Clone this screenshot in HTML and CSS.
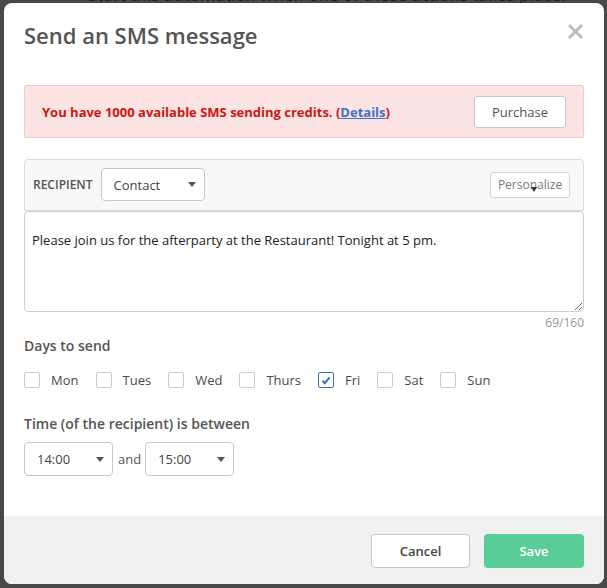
FILE: index.html
```html
<!DOCTYPE html>
<html lang="en">
<head>
    <meta charset="UTF-8">
    <meta name="viewport" content="width=device-width, initial-scale=1.0">
    <title>Send an SMS message</title>
    <link rel="stylesheet" href="styles.css">
</head>
<body>
    <!-- Page behind the overlay -->
    <p class="page-text">Start this automation when one of these actions takes place.</p>

    <div class="modal">
        <header class="modal-header">
            <h1>Send an SMS message</h1>
            <button class="close" aria-label="Close">
                <svg width="15" height="15" viewBox="0 0 15 15">
                    <path d="M2 2 L13 13 M13 2 L2 13" stroke="#bdbdbd" stroke-width="3" stroke-linecap="square"/>
                </svg>
            </button>
        </header>

        <div class="modal-body">
            <div class="alert">
                <p>You have 1000 available SMS sending credits. (<a href="#details">Details</a>)</p>
                <button class="btn">Purchase</button>
            </div>

            <div class="composer">
                <div class="composer-bar">
                    <span class="bar-label">RECIPIENT</span>
                    <div class="select select-contact">
                        <span>Contact</span>
                        <i class="caret"></i>
                    </div>
                    <button class="btn btn-small personalize">
                        Personalize
                        <i class="caret caret-dark"></i>
                    </button>
                </div>
                <textarea class="message">Please join us for the afterparty at the Restaurant! Tonight at 5 pm.</textarea>
            </div>
            <div class="counter">69/160</div>

            <h3 class="field-label">Days to send</h3>
            <div class="days">
                <label class="day"><span class="box"></span>Mon</label>
                <label class="day"><span class="box"></span>Tues</label>
                <label class="day"><span class="box"></span>Wed</label>
                <label class="day"><span class="box"></span>Thurs</label>
                <label class="day"><span class="box checked">
                    <svg width="10" height="9" viewBox="0 0 10 9">
                        <path d="M1.5 4.8 L3.8 7.2 L8.6 1.4" fill="none" stroke="#3a6fc0" stroke-width="2"/>
                    </svg>
                </span>Fri</label>
                <label class="day"><span class="box"></span>Sat</label>
                <label class="day"><span class="box"></span>Sun</label>
            </div>

            <h3 class="field-label time-label">Time (of the recipient) is between</h3>
            <div class="time-row">
                <div class="select select-time">
                    <span>14:00</span>
                    <i class="caret"></i>
                </div>
                <span class="and">and</span>
                <div class="select select-time">
                    <span>15:00</span>
                    <i class="caret"></i>
                </div>
            </div>
        </div>

        <footer class="modal-footer">
            <button class="btn btn-cancel">Cancel</button>
            <button class="btn btn-save">Save</button>
        </footer>
    </div>
</body>
</html>
```

FILE: styles.css
```css
/* Reset */
* {
    margin: 0;
    padding: 0;
    box-sizing: border-box;
}

body {
    font-family: "Open Sans", Arial, sans-serif;
    background-color: #484848;
    height: 588px;
    overflow: hidden;
    position: relative;
}

/* page behind the modal, only its lower edge shows */
.page-text {
    position: absolute;
    top: -16px;
    left: 88px;
    font-size: 17px;
    line-height: 22px;
    color: #1e1e1e;
    white-space: nowrap;
}

/* Modal */
.modal {
    position: relative;
    z-index: 1;
    width: 600px;
    height: 581px;
    margin: 3px 0 0 4px;
    background: white;
    border-radius: 8px;
    overflow: hidden;
    display: flex;
    flex-direction: column;
}

.modal-header {
    display: flex;
    justify-content: space-between;
    align-items: flex-start;
    padding: 17px 20px 0 20px;
}

.modal-header h1 {
    font-size: 22px;
    font-weight: 600;
    line-height: 30px;
    color: #555;
}

.close {
    border: none;
    background: none;
    margin-top: 4px;
    margin-right: 1px;
    width: 15px;
    height: 15px;
}

.modal-body {
    flex: 1;
    padding: 0 20px;
}

/* Credits alert */
.alert {
    margin-top: 35px;
    display: flex;
    justify-content: space-between;
    align-items: center;
    background: #fde4e4;
    border: 1px solid #f6c9c9;
    border-radius: 2px;
    padding: 10px 17px 9px 17px;
}

.alert p {
    font-size: 13px;
    font-weight: 700;
    color: #d0150f;
}

.alert a {
    color: #3b73c2;
}

.btn {
    font-family: "Open Sans", Arial, sans-serif;
    background: white;
    border: 1px solid #c8c8c8;
    border-radius: 3px;
    font-size: 13px;
    color: #555;
}

.alert .btn {
    width: 92px;
    height: 32px;
}

/* Composer */
.composer {
    margin-top: 21px;
}

.composer-bar {
    display: flex;
    align-items: center;
    height: 52px;
    background: #f8f8f8;
    border: 1px solid #dcdcdc;
    border-radius: 4px 4px 0 0;
    padding: 0 13px 1px 8px;
}

.bar-label {
    font-size: 12px;
    font-weight: 600;
    color: #555;
    margin-right: 8px;
}

.select {
    display: flex;
    align-items: center;
    justify-content: space-between;
    background: white;
    border: 1px solid #c8c8c8;
    border-radius: 4px;
    font-size: 13px;
    color: #444;
}

.select-contact {
    width: 104px;
    height: 33px;
    padding: 0 8px 0 12px;
}

.caret {
    display: block;
    width: 0;
    height: 0;
    border-left: 4px solid transparent;
    border-right: 4px solid transparent;
    border-top: 5px solid #555;
}

.personalize {
    position: relative;
    margin-left: auto;
    width: 80px;
    height: 26px;
    font-size: 12px;
    color: #7a7a7a;
    border-color: #d4d4d4;
}

.caret-dark {
    position: absolute;
    left: 40px;
    top: 14px;
    border-top-color: #333;
    border-left-width: 3.5px;
    border-right-width: 3.5px;
}

.message {
    display: block;
    width: 560px;
    height: 101px;
    border: 1px solid #cfcfcf;
    border-radius: 4px;
    padding: 19px 7px;
    font-family: "Open Sans", Arial, sans-serif;
    font-size: 13px;
    line-height: 18px;
    color: #222;
    resize: vertical;
    outline: none;
}

.counter {
    text-align: right;
    font-size: 12px;
    line-height: 16px;
    margin-top: 3px;
    color: #999;
}

/* Days */
.field-label {
    font-size: 14px;
    font-weight: 600;
    line-height: 20px;
    color: #555;
    margin-top: 5px;
}

.days {
    display: flex;
    align-items: center;
    gap: 17px;
    margin-top: 14px;
    height: 20px;
}

.day {
    display: flex;
    align-items: center;
    gap: 11px;
    font-size: 13px;
    color: #4a4a4a;
}

.box {
    width: 16px;
    height: 16px;
    border: 1px solid #cdcdcd;
    border-radius: 2px;
    display: flex;
    align-items: center;
    justify-content: center;
}

.box.checked {
    border-color: #3a6fc0;
}

/* Time */
.time-label {
    margin-top: 24px;
}

.time-row {
    display: flex;
    align-items: center;
    margin-top: 8px;
}

.select-time {
    width: 89px;
    height: 34px;
    padding: 0 8px 0 12px;
}

.and {
    font-size: 13px;
    color: #555;
    margin: 0 4px 0 5px;
}

/* Footer */
.modal-footer {
    display: flex;
    justify-content: flex-end;
    gap: 14px;
    background: #f1f1f1;
    height: 68px;
    padding: 18px 20px 0 0;
}

.modal-footer .btn {
    width: 99px;
    height: 34px;
    border-radius: 4px;
    font-weight: 600;
}

.btn-cancel {
    color: #444;
}

.btn-save {
    border: none;
    background: #5bcd98;
    color: white;
    width: 100px !important;
}
```
